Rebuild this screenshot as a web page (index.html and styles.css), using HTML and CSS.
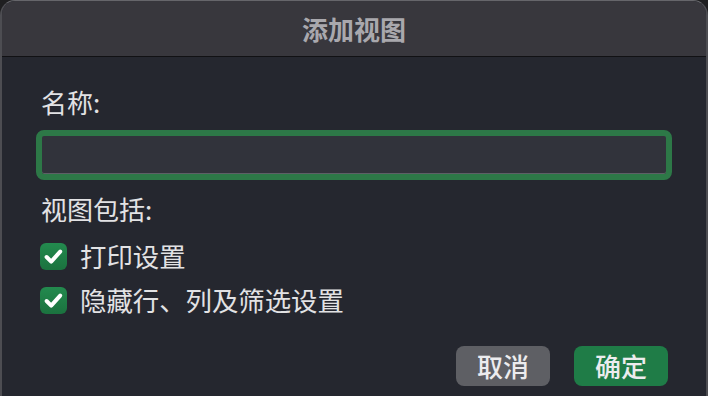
FILE: index.html
```html
<!DOCTYPE html>
<html lang="zh-CN">
<head>
<meta charset="utf-8">
<title>添加视图</title>
<link rel="stylesheet" href="styles.css">
</head>
<body>
<div class="window">
  <div class="titlebar">添加视图</div>
  <div class="content">
    <div class="label">名称:</div>
    <div class="field"></div>
    <div class="label label-2">视图包括:</div>
    <div class="check-row row-1">
      <span class="checkbox"><svg viewBox="0 0 27 27" width="27" height="27"><path d="M6.6 14 L11.2 18.6 L20.2 8.6" fill="none" stroke="#ffffff" stroke-width="4" stroke-linecap="round" stroke-linejoin="round"/></svg></span>
      <span class="check-text">打印设置</span>
    </div>
    <div class="check-row row-2">
      <span class="checkbox"><svg viewBox="0 0 27 27" width="27" height="27"><path d="M6.6 14 L11.2 18.6 L20.2 8.6" fill="none" stroke="#ffffff" stroke-width="4" stroke-linecap="round" stroke-linejoin="round"/></svg></span>
      <span class="check-text">隐藏行、列及筛选设置</span>
    </div>
    <div class="buttons">
      <div class="btn btn-cancel">取消</div>
      <div class="btn btn-ok">确定</div>
    </div>
  </div>
</div>
</body>
</html>
```
FILE: styles.css
```css
html, body {
  margin: 0;
  padding: 0;
  background: #1f1f21;
}
body {
  width: 708px;
  height: 396px;
  overflow: hidden;
  font-family: "Noto Sans CJK SC", "Noto Sans", sans-serif;
}
.window {
  box-sizing: border-box;
  width: 708px;
  height: 396px;
  border-radius: 15px 15px 0 0;
  border: 2px solid #4d4d52;
  border-top: 1px solid #66666b;
  border-bottom: none;
  background: #25272f;
  overflow: hidden;
}
.titlebar {
  height: 55px;
  line-height: 55px;
  text-align: center;
  background: #38373d;
  border-bottom: 1px solid #111114;
  color: #a9a8ad;
  font-size: 26px;
  font-weight: 700;
}
.content {
  padding: 31px 38px 0 39px;
  display: flex;
  flex-direction: column;
}
.label {
  height: 28px;
  line-height: 28px;
  font-size: 26px;
  font-weight: 400;
  color: #e2e2e4;
}
.field {
  box-sizing: border-box;
  height: 50px;
  margin: 14px -4px 0 -5px;
  border: 6px solid #2d7847;
  border-radius: 8px;
  background: #31333b;
  box-shadow: inset 0 -1px 0 #5d6066;
}
.label-2 {
  margin-top: 15px;
}
.check-row {
  display: flex;
  align-items: center;
  height: 28px;
  gap: 13px;
  margin-left: -1px;
}
.row-1 {
  margin-top: 19px;
}
.row-2 {
  margin-top: 16px;
}
.checkbox {
  width: 27px;
  height: 27px;
  border-radius: 6px;
  background: linear-gradient(#238a4e, #1b723f);
  display: flex;
}
.check-text {
  font-size: 26.4px;
  font-weight: 400;
  line-height: 28px;
  color: #e2e2e4;
}
.buttons {
  display: flex;
  justify-content: flex-end;
  gap: 24px;
  margin-top: 32px;
}
.btn {
  width: 94px;
  height: 40px;
  line-height: 40px;
  border-radius: 8px;
  text-align: center;
  font-size: 26px;
  font-weight: 500;
  color: #ececee;
}
.btn-cancel {
  background: #5e5f64;
}
.btn-ok {
  background: #1f7c47;
}
```
